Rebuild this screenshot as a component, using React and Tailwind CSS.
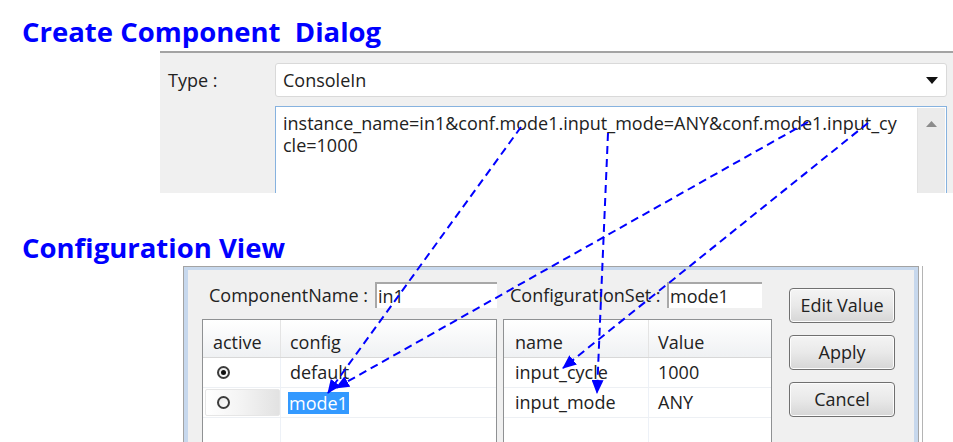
function Radio({ checked }) {
  return (
    <span className="flex h-[13px] w-[13px] items-center justify-center rounded-full border-2 border-[#3c3c3c] bg-gradient-to-br from-[#e8e8e8] to-white">
      {checked && <span className="h-[5px] w-[5px] rounded-full bg-[#111]" />}
    </span>
  );
}

function CreateDialog() {
  return (
    <div className="ml-[160px] flex h-[142px] flex-col gap-[9px] overflow-hidden border-t-2 border-[#a3a3a3] bg-[#f0f0f0] pr-[6px] pt-[10px]">
      <div className="flex h-[34px] shrink-0 items-center">
        <span className="w-[115px] shrink-0 pl-[8px]">Type :</span>
        <div className="flex h-full flex-1 items-center justify-between rounded-[3px] border border-[#d9d9d9] bg-white pl-[7px] pr-[8px]">
          <span>ConsoleIn</span>
          <svg width="12" height="7" viewBox="0 0 12 7">
            <path d="M0 0 L12 0 L6 7 Z" fill="#111" />
          </svg>
        </div>
      </div>
      <div className="flex shrink-0 pl-[115px]">
        <div className="flex h-[120px] flex-1 border border-[#86b2df] bg-white">
          <div className="flex-1 pl-[7px] pt-[5px] leading-[22px]">
            <div>instance_name=in1&amp;conf.mode1.input_mode=ANY&amp;conf.mode1.input_cy</div>
            <div>cle=1000</div>
          </div>
          <div className="mr-[1px] mt-[1px] flex w-[28px] justify-center border-l border-[#e2e2e2] bg-[#ebebeb] pt-[13px]">
            <svg width="11" height="6" viewBox="0 0 11 6">
              <path d="M0 6 L5.5 0 L11 6 Z" fill="#8c8c8c" />
            </svg>
          </div>
        </div>
      </div>
    </div>
  );
}

function Field({ label, value, labelWidth, inputWidth }) {
  return (
    <div className="flex h-[26px] items-center pl-[7px]">
      <span className={labelWidth}>{label}</span>
      <div className={`flex h-full items-center border-l-2 border-t-2 border-[#a8a8a8] bg-white pl-[1px] ${inputWidth}`}>
        {value}
      </div>
    </div>
  );
}

function ConfigView() {
  return (
    <div className="ml-[183px] mt-[5px] flex">
      <div className="w-[736px] border border-b-0 border-[#a3a3a3] bg-[#c7d8ed] px-[4px] pt-[3px]">
        <div className="flex h-[180px] bg-[#f0f0f0] pl-[14px] pt-[12px]">
          <div className="grid grid-cols-[295px_269px] gap-x-[6px] gap-y-[11px]">
            <Field label="ComponentName :" value="in1" labelWidth="w-[166px]" inputWidth="w-[122px]" />
            <div className="flex">
              <Field label="ConfigurationSet :" value="mode1" labelWidth="w-[157px]" inputWidth="w-[95px]" />
            </div>

            <div className="h-[140px] border border-[#8f9193] bg-white">
              <div className="flex h-[38px] border-b border-[#d8d8d8] bg-gradient-to-b from-white to-[#eff1f3]">
                <div className="w-[78px] border-r border-[#e4e4e4] pl-[10px] pt-[9px]">active</div>
                <div className="flex-1 pl-[9px] pt-[9px]">config</div>
              </div>
              <div className="flex h-[30px] border-b border-[#edf0f4]">
                <div className="flex w-[78px] items-center border-r border-[#edf1f7] pl-[14px]">
                  <Radio checked />
                </div>
                <div className="flex flex-1 items-center pl-[9px]">default</div>
              </div>
              <div className="flex h-[30px] border-b border-[#edf0f4]">
                <div className="flex w-[78px] items-center border-r border-[#edf1f7] py-[1px] pl-[2px]">
                  <div className="flex h-full w-full items-center rounded-[2px] border border-[#e6e6e6] bg-gradient-to-r from-white via-[#f3f3f3] to-[#e2e2e2] pl-[11px]">
                    <Radio />
                  </div>
                </div>
                <div className="flex flex-1 items-center pl-[7px]">
                  <span className="bg-[#3399ff] px-[1px] leading-[22px] text-white">mode1</span>
                </div>
              </div>
              <div className="flex h-[40px]">
                <div className="w-[78px] border-r border-[#edf1f7]" />
              </div>
            </div>

            <div className="h-[140px] border border-[#8f9193] bg-white">
              <div className="flex h-[38px] border-b border-[#d8d8d8] bg-gradient-to-b from-white to-[#eff1f3]">
                <div className="w-[145px] border-r border-[#e4e4e4] pl-[11px] pt-[9px]">name</div>
                <div className="flex-1 pl-[9px] pt-[9px]">Value</div>
              </div>
              {[
                ["input_cycle", "1000"],
                ["input_mode", "ANY"],
              ].map(([n, v]) => (
                <div key={n} className="flex h-[30px] border-b border-[#edf0f4]">
                  <div className="flex w-[145px] items-center border-r border-[#edf1f7] pl-[11px]">{n}</div>
                  <div className="flex flex-1 items-center pl-[9px]">{v}</div>
                </div>
              ))}
              <div className="flex h-[40px]">
                <div className="w-[145px] border-r border-[#edf1f7]" />
              </div>
            </div>
          </div>

          <div className="ml-[17px] flex flex-col gap-[12px] pt-[6px]">
            {["Edit Value", "Apply", "Cancel"].map((b) => (
              <button
                key={b}
                className="flex h-[35px] w-[106px] items-center justify-center rounded-[4px] border border-[#707070] bg-gradient-to-b from-[#f4f4f4] via-[#e9e9e9] to-[#d6d6d6] shadow-[inset_0_0_0_1px_#fcfcfc]"
              >
                {b}
              </button>
            ))}
          </div>
        </div>
      </div>
      <div className="ml-[3px] w-[1px] bg-[#b4b4b4]" />
    </div>
  );
}

function Arrows() {
  const lines = [
    [521, 127, 328, 393],
    [608, 133, 597, 393],
    [808, 122, 336, 388],
    [868, 123, 563, 368],
  ];
  return (
    <svg className="pointer-events-none absolute left-0 top-0" width="953" height="442" viewBox="0 0 953 442">
      <defs>
        <marker id="head" markerUnits="userSpaceOnUse" markerWidth="14" markerHeight="12" refX="13" refY="6" orient="auto">
          <path d="M0 0 L14 6 L0 12 Z" fill="#0000ff" />
        </marker>
      </defs>
      {lines.map(([x1, y1, x2, y2], i) => (
        <line
          key={i}
          x1={x1}
          y1={y1}
          x2={x2}
          y2={y2}
          stroke="#0000ff"
          strokeWidth="2"
          strokeDasharray="8 5"
          markerEnd="url(#head)"
        />
      ))}
    </svg>
  );
}

export default function App() {
  return (
    <div className="relative h-[442px] w-[953px] overflow-hidden bg-white font-['Open_Sans',sans-serif] text-[18px] text-[#222]">
      <h1 className="h-[51px] pl-[22px] pt-[18px] text-[27.5px] font-bold leading-[27px] text-[#0000ff]">
        Create Component&nbsp; Dialog
      </h1>
      <CreateDialog />
      <h1 className="mt-[41px] h-[27px] pl-[22px] text-[27.5px] font-bold leading-[27px] text-[#0000ff]">Configuration View</h1>
      <ConfigView />
      <Arrows />
    </div>
  );
}
